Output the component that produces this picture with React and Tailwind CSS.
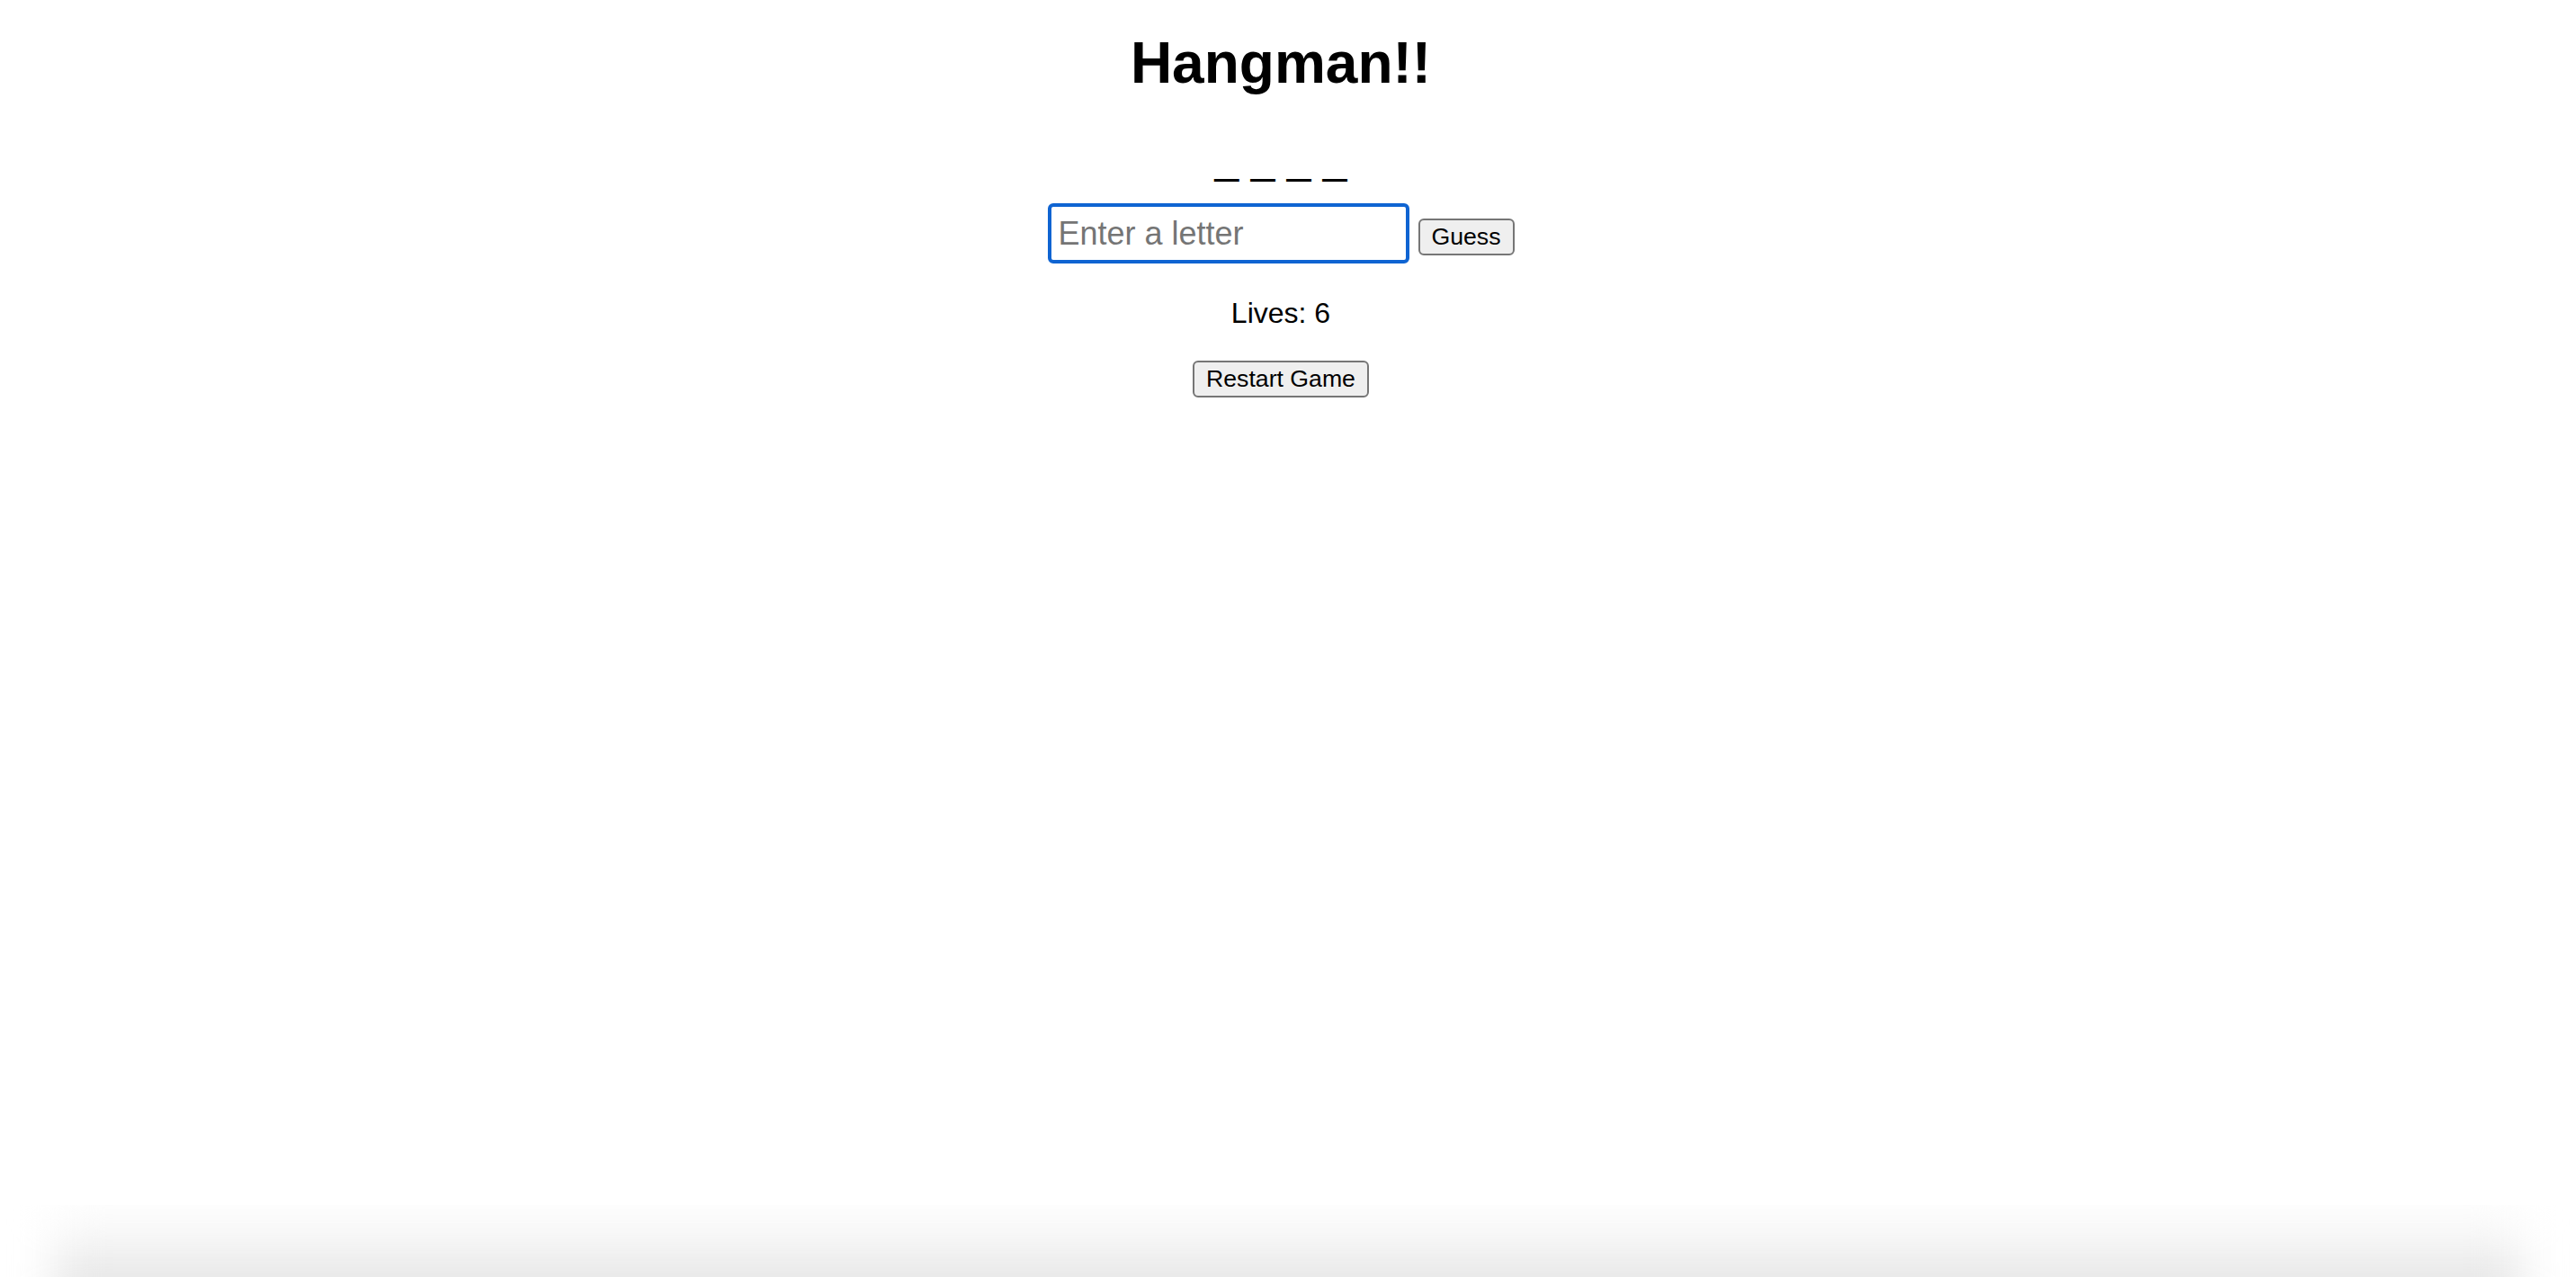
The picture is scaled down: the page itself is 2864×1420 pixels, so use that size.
export default function App() {
  const word = ["_", "_", "_", "_"];

  return (
    <div className="w-full h-screen flex flex-col bg-white text-black font-['Liberation_Sans',Arial,sans-serif]">
      {/* Game */}
      <div className="flex-1 flex flex-col items-center pr-[16px]">
        <h1 className="mt-[34px] text-[64px] leading-[72px] font-bold">Hangman!!</h1>

        <div className="mt-[42px] text-[48px] leading-[56px]">{word.join(" ")}</div>

        <div className="mt-[22px] flex items-start gap-[10px]">
          <input
            type="text"
            placeholder="Enter a letter"
            className="w-[402px] h-[67px] pl-[8px] text-[36px] border-[4px] border-[#0f64d2] rounded-[6px] outline-none placeholder:text-[#757575]"
          />
          <button className="mt-[17px] w-[107px] h-[41px] text-[26.67px] leading-none bg-[#efefef] border-2 border-[#767676] rounded-[6px]">
            Guess
          </button>
        </div>

        <p className="mt-[37px] text-[32px] leading-[36px]">Lives: 6</p>

        <button className="mt-[35px] w-[196px] h-[41px] text-[26.67px] leading-none bg-[#efefef] border-2 border-[#767676] rounded-[6px]">
          Restart Game
        </button>
      </div>

      {/* Window shadow at the bottom */}
      <div className="h-[80px] overflow-hidden">
        <div className="mx-[60px] h-[120px] blur-[24px] bg-[linear-gradient(to_bottom,#ffffff_0px,#fbfbfb_20px,#f3f3f3_50px,#e6e6e6_80px,#e2e2e2_120px)]" />
      </div>
    </div>
  );
}
